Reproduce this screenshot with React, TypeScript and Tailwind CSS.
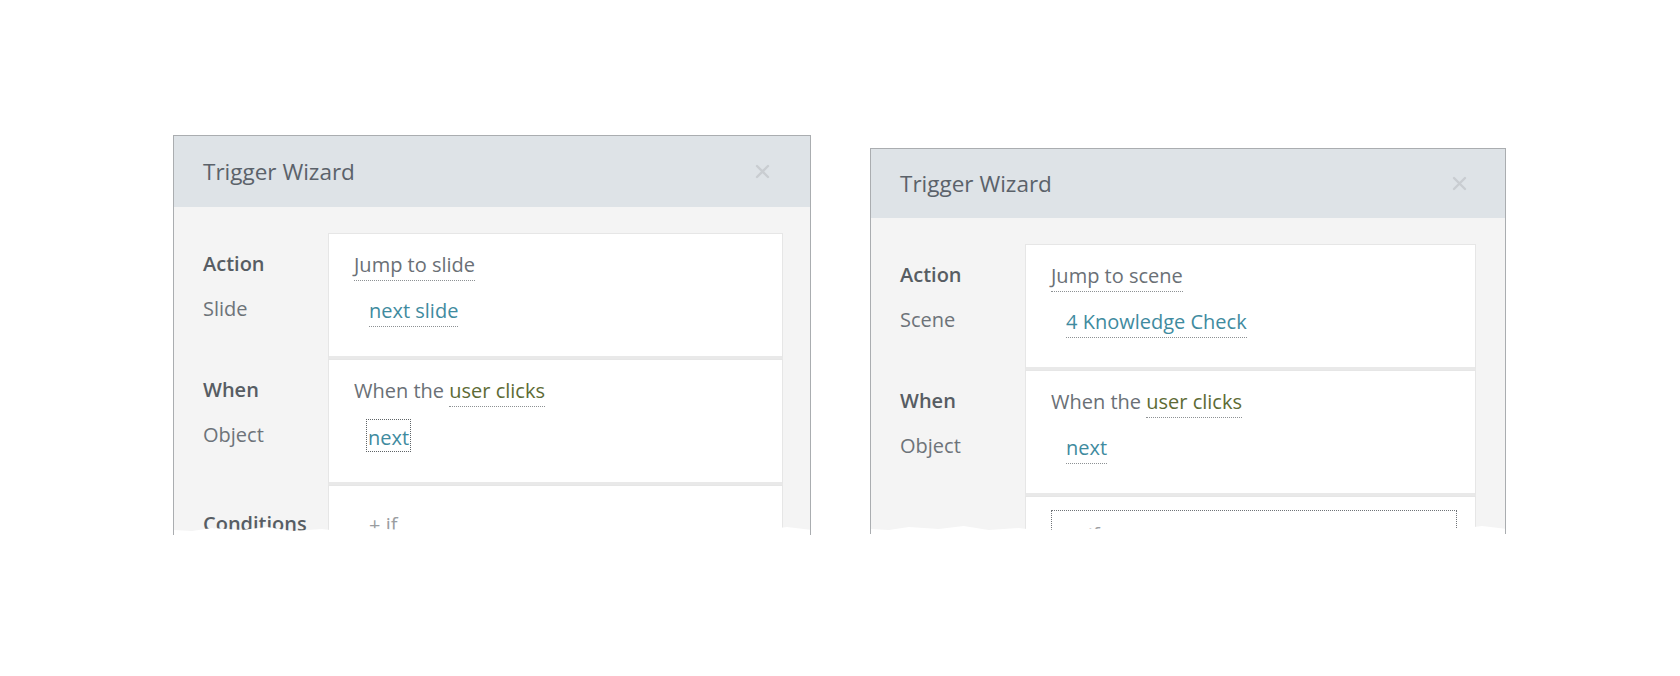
import type { ReactNode } from "react";

const font = "font-['Open_Sans','Noto_Sans',sans-serif]";

function Close() {
  return (
    <svg width="15" height="15" viewBox="0 0 15 15" className="shrink-0">
      <path d="M2 2 L13 13 M13 2 L2 13" stroke="#c9cdd1" strokeWidth="2.4" strokeLinecap="round" />
    </svg>
  );
}

function Dotted({ children, className = "" }: { children: ReactNode; className?: string }) {
  return (
    <span className={`inline-block leading-6 pb-[3px] border-b border-dotted border-[#8d9194] ${className}`}>
      {children}
    </span>
  );
}

function Row({
  title,
  sub,
  children,
  top = "pt-[19px]",
  labelTop = "pt-[19px]",
}: {
  title: string;
  sub?: string;
  children: ReactNode;
  top?: string;
  labelTop?: string;
}) {
  return (
    <div className="flex">
      <div className={`w-[154px] shrink-0 pl-[29px] text-[20px] leading-6 ${labelTop}`}>
        <div className="font-semibold text-[#575d63]">{title}</div>
        {sub && <div className="mt-[21px] text-[#6d7379]">{sub}</div>}
      </div>
      <div
        className={`flex-1 h-[126px] bg-white border border-[#e6e6e6] border-b-[3px] border-b-[#e9e9e9] pl-[25px] text-[20px] leading-6 ${top}`}
      >
        {children}
      </div>
    </div>
  );
}

function Torn() {
  return (
    <svg
      className="absolute left-[-2px] bottom-0 w-[calc(100%+4px)] h-[9px]"
      viewBox="0 0 640 9"
      preserveAspectRatio="none"
    >
      <path
        d="M0 4 L20 5 L40 2 L70 4 L95 1 L120 5 L150 3 L175 6 L200 2 L230 4 L260 1 L290 5 L320 3 L350 4 L380 1 L410 5 L440 2 L470 4 L500 1 L530 5 L560 3 L590 4 L615 1 L640 4 L640 9 L0 9 Z"
        fill="#ffffff"
      />
    </svg>
  );
}

function Panel({
  outer,
  header,
  close,
  right,
  children,
}: {
  outer: string;
  header: string;
  close: string;
  right: string;
  children: ReactNode;
}) {
  return (
    <div className={`relative shrink-0 overflow-hidden border-x border-t border-[#aaadb0] bg-[#f4f4f4] ${outer}`}>
      <div className={`flex ${header} items-center justify-between bg-[#dee3e7] pl-[29px] ${close}`}>
        <span className="text-[22.5px] leading-[30px] text-[#5b626a]">Trigger Wizard</span>
        <Close />
      </div>
      <div className={`flex flex-col pt-[26px] ${right}`}>{children}</div>
      <Torn />
    </div>
  );
}

export default function App() {
  return (
    <div className={`w-[1680px] h-[676px] bg-white flex items-start gap-[59px] pl-[173px] pt-[135px] ${font}`}>
      <Panel outer="w-[638px] h-[400px]" header="h-[71px]" close="pr-[40px]" right="pr-[27px]">
        <Row title="Action" sub="Slide">
          <Dotted className="text-[#6a7076]">Jump to slide</Dotted>
          <div className="mt-[18px] ml-[15px]">
            <Dotted className="text-[#3f8ba0]">next slide</Dotted>
          </div>
        </Row>
        <Row title="When" sub="Object">
          <div className="h-[28px] text-[#6a7076]">
            When the <Dotted className="text-[#5d6b35]">user clicks</Dotted>
          </div>
          <div className="mt-[12px] ml-[12px]">
            <span className="inline-block leading-6 border border-dotted border-[#5e6366] px-[1px] pt-[6px] pb-[1px] text-[#3f8ba0]">
              next
            </span>
          </div>
        </Row>
        <Row title="Conditions" top="pt-[27px]" labelTop="pt-[27px]">
          <span className="ml-[15px] text-[#9a9da0]">+ if</span>
        </Row>
      </Panel>

      <Panel outer="w-[636px] h-[386px] mt-[13px]" header="h-[69px]" close="pr-[38px]" right="pr-[29px]">
        <Row title="Action" sub="Scene">
          <Dotted className="text-[#6a7076]">Jump to scene</Dotted>
          <div className="mt-[18px] ml-[15px]">
            <Dotted className="text-[#3f8ba0]">4 Knowledge Check</Dotted>
          </div>
        </Row>
        <Row title="When" sub="Object">
          <div className="h-[28px] text-[#6a7076]">
            When the <Dotted className="text-[#5d6b35]">user clicks</Dotted>
          </div>
          <div className="mt-[18px] ml-[15px]">
            <Dotted className="text-[#3f8ba0]">next</Dotted>
          </div>
        </Row>
        <Row title="Conditions" top="pt-[13px]" labelTop="pt-[29px]">
          <div className="mr-[18px] h-[60px] border border-dotted border-[#6f7377] pl-[19px] pt-[12px] text-[#9a9da0]">
            + if
          </div>
        </Row>
      </Panel>
    </div>
  );
}
